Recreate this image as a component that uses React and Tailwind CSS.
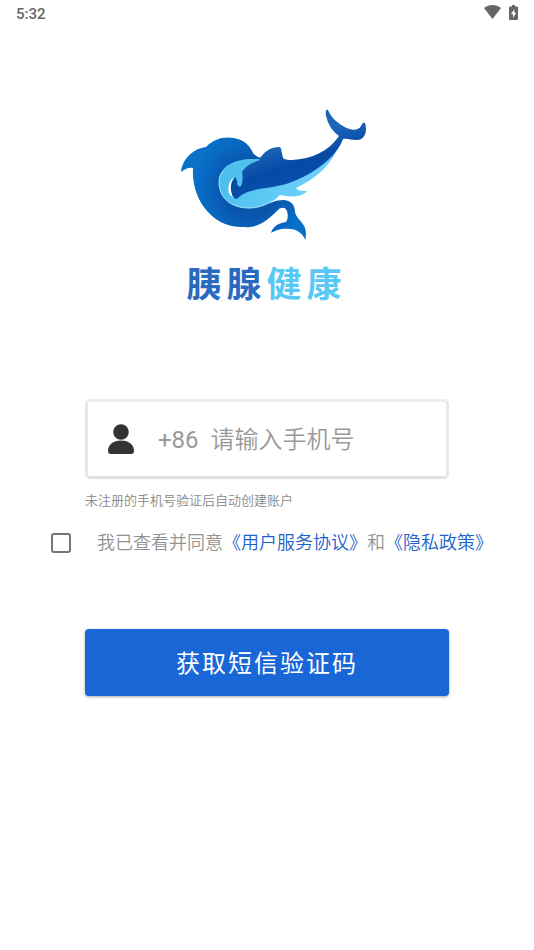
import React, { useState } from "react";

const StatusBar = () => (
  <header className="flex h-7 items-center justify-between pl-4 pr-4 font-['Roboto',sans-serif] text-[#666666]">
    <span className="text-[15px] leading-7 font-medium">5:32</span>
    <div className="flex items-center gap-2 pb-1">
      <svg width="17" height="14" viewBox="0 0 17 14" aria-hidden="true">
        <path d="M0 3C5-1 12-1 17 3L8.500 14Z" fill="currentColor" />
      </svg>
      <svg width="9" height="15" viewBox="0 0 9 15" aria-hidden="true">
        <path d="M3 0h3v1.500h2q1 0 1 1V14q0 1-1 1H1q-1 0-1-1V2.500q0-1 1-1h2Z" fill="currentColor" />
        <path d="M5.500 4 2 9h2v4l3.200-5.200H5.300Z" fill="#fff" />
      </svg>
    </div>
  </header>
);

const DolphinLogo = () => (
  <svg className="h-[136px] w-[190px]" viewBox="178 106 190 136" aria-hidden="true">
    <defs>
      <radialGradient id="body" gradientUnits="userSpaceOnUse" cx="252" cy="188" r="60">
        <stop offset="0.45" stopColor="#0b54ac" />
        <stop offset="0.85" stopColor="#076bc5" />
        <stop offset="1" stopColor="#0a70c8" />
      </radialGradient>
      <linearGradient id="back" gradientUnits="userSpaceOnUse" x1="268" y1="148" x2="280" y2="186">
        <stop offset="0" stopColor="#1c66ba" />
        <stop offset="0.6" stopColor="#0549a4" />
        <stop offset="1" stopColor="#0850ac" />
      </linearGradient>
      <linearGradient id="belly" gradientUnits="userSpaceOnUse" x1="220" y1="165" x2="300" y2="200">
        <stop offset="0" stopColor="#48bdec" />
        <stop offset="1" stopColor="#6bcffa" />
      </linearGradient>
    </defs>
    {/* Curled dolphin */}
    <path
      d="M181 172C182 161 191 149 206 147C213 139 224 136 234 138C245 140 250 146 253 153Q256 157 262 158L270 203Q276 200 283 200C291 200 295 205 295 212C297 221 306 222 306 234L305.500 240C302 233 297 229 290 229C281 228 277 230 271 233C273 226 279 223 286 222C289 218 288 209 284 208Q280 207 277 211C264 224 255 228 243 227C215 228 191 202 193 168C189 167 185 169 181 172Z"
      fill="url(#body)"
    />
    {/* Belly and flipper */}
    <path
      d="M260 159C240 158 219 164 219 182C219 198 231 208 249 208C263 208 273 202 280 195C288 197 302 198 307 191C303 191 298 191 296 188C314 179 331 168 341 141Q325 163 300 168Z"
      fill="url(#belly)"
    />
    <path
      d="M253 160C236 161 219 167 219 182C219 198 231 208 249 208C258 208 266 205 272 201"
      fill="none"
      stroke="#a2e3f8"
      strokeWidth="1"
    />
    <path d="M236 177C230 178 227 187 229 193Q231 197 236 199Z" fill="#fff" />
    {/* Leaping dolphin */}
    <path
      d="M259 160C264 151 271 147 279 147Q281 147 281 149L283 158Q285 160 292 160C312 159 329 151 339 136Q329 129 326 116Q325 108 328 110C331 117 336 122 343 126C351 131 358 131 361 126Q363 121 365 123C368 132 364 140 357 140C351 140 347 138 343 139C337 156 315 174 289 183C268 190 247 187 237 199Q234 199 233 197C230 191 230 183 234 178C239 169 248 164 259 160Z"
      fill="url(#back)"
    />
    <path d="M260 160C248 157 229 161 223 170Q230 174 235 177Q238 180 237 184Q238 187 240 187C243 184 243 178 242 172Q248 163 260 160Z" fill="#50c0ed" />
  </svg>
);

const UserIcon = () => (
  <svg className="h-[30px] w-[26px] shrink-0" viewBox="0 0 26 30" fill="#333333" aria-hidden="true">
    <circle cx="13" cy="8" r="7.800" />
    <path d="M13 16.500C5 16.500 0 21 0 27Q0 30 3 30H23Q26 30 26 27C26 21 21 16.500 13 16.500Z" />
  </svg>
);

const App = () => {
  const [phone, setPhone] = useState("");
  const [agreed, setAgreed] = useState(false);

  return (
    <div className="min-h-screen bg-white font-['Roboto','Noto_Sans_CJK_SC',sans-serif]">
      <StatusBar />

      <main className="flex flex-col pt-[78px]">
        {/* Brand */}
        <div className="flex flex-col items-center">
          <div className="pl-3">
            <DolphinLogo />
          </div>
          <h1 className="mt-4 flex gap-[5px] pr-1.5 text-[35px] leading-[56px] font-bold text-[#2a69c0]">
            <span>胰</span>
            <span>腺</span>
            <span className="text-[#5ac8f5]">健</span>
            <span className="text-[#5ac8f5]">康</span>
          </h1>
        </div>

        <form onSubmit={(e) => e.preventDefault()}>
          {/* Phone */}
          <div className="mx-[85px] mt-[85px]">
            <div className="flex h-20 items-center rounded-[5px] border-[3px] border-t-[#eeeeee] border-x-[#e8e8e8] border-b-[#e0e0e0] px-5 text-2xl text-[#999999]">
              <UserIcon />
              <label htmlFor="phone" className="ml-6 pt-0.5">
                +86
              </label>
              <input
                id="phone"
                type="tel"
                value={phone}
                onChange={(e) => setPhone(e.target.value)}
                placeholder="请输入手机号"
                className="ml-3 h-12 w-full min-w-0 bg-transparent pt-0.5 font-[350] outline-none placeholder:text-[#999999]"
              />
            </div>
            <p className="mt-3 text-[13px] leading-5 font-[350] text-[#888888]">未注册的手机号验证后自动创建账户</p>
          </div>

          {/* Agreement */}
          <div className="mt-4 flex items-center pl-[51px] text-lg leading-8 font-[350] whitespace-nowrap text-[#929292]">
            <input
              id="agree"
              type="checkbox"
              checked={agreed}
              onChange={(e) => setAgreed(e.target.checked)}
              className="size-5 shrink-0 appearance-none rounded-[3px] border-2 border-[#757575] checked:bg-[#1966d6]"
            />
            <label htmlFor="agree" className="ml-[26px]">
              我已查看并同意
              <a href="#terms" className="text-[#1b62cc]">《用户服务协议》</a>
              和
              <a href="#privacy" className="text-[#1b62cc]">《隐私政策》</a>
            </label>
          </div>

          <div className="mx-[85px] mt-[70px]">
            <button
              type="submit"
              className="h-[67px] w-full rounded-[4px] bg-[#1966d6] pt-0.5 text-2xl tracking-[2px] text-white shadow-[0_1px_3px_rgba(0,0,0,0.35)]"
            >
              获取短信验证码
            </button>
          </div>
        </form>
      </main>
    </div>
  );
};

export default App;
